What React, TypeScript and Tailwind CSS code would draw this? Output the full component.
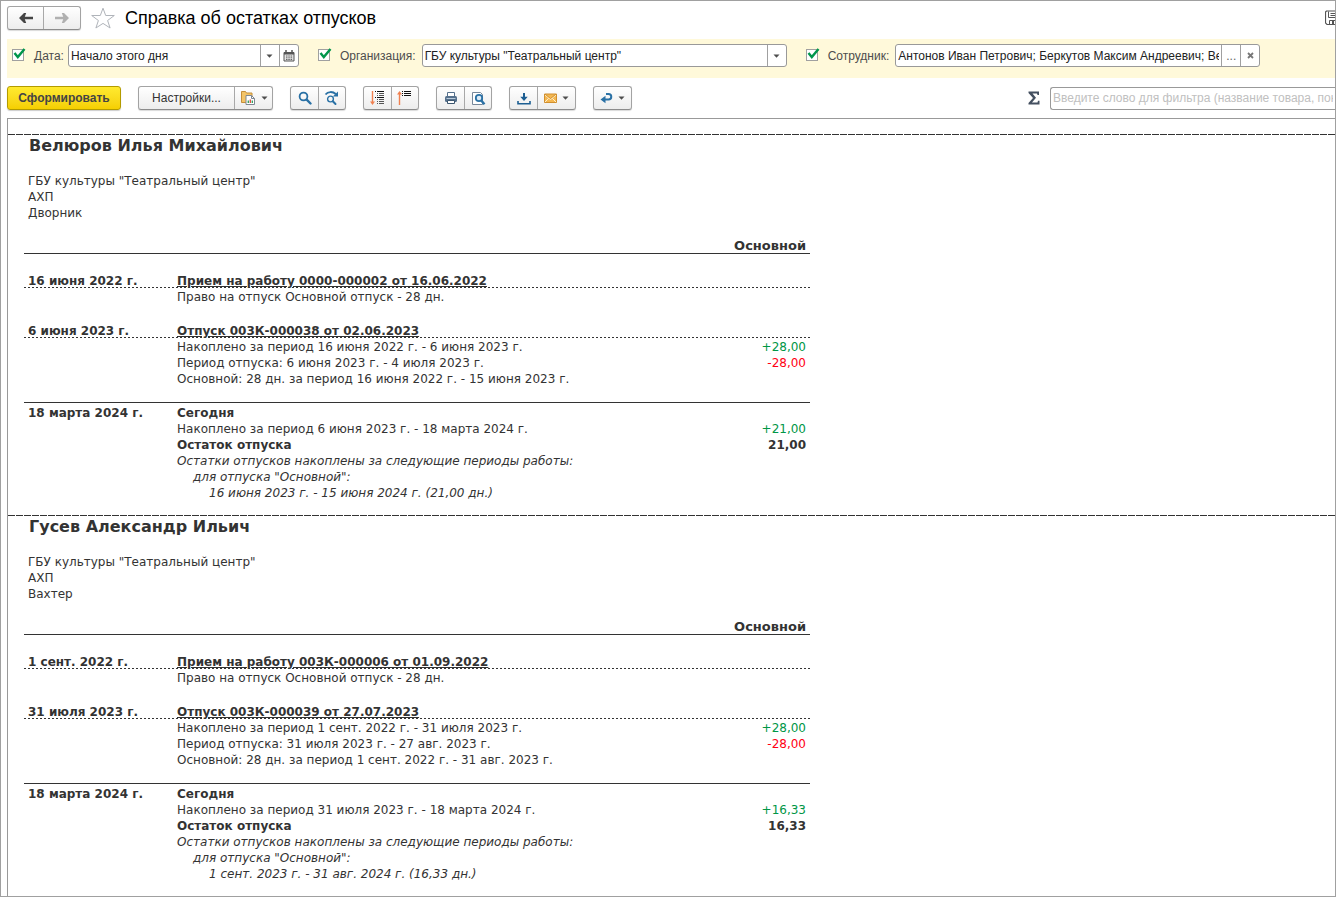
import { useState, type ReactNode } from "react";

type Line = { text: string; amount?: string; tone?: string; className?: string };

type Entry = {
  date: string;
  title: string;
  lines: Line[];
};

type Employee = {
  name: string;
  position: string;
  entries: Entry[];
  summary: Entry;
};

const ORGANIZATION = 'ГБУ культуры "Театральный центр"';

const GREEN = "text-[#009646]";
const RED = "text-[#ff0014]";

const EMPLOYEES: Employee[] = [
  {
    name: "Велюров Илья Михайлович",
    position: "Дворник",
    entries: [
      {
        date: "16 июня 2022 г.",
        title: "Прием на работу 0000-000002 от 16.06.2022",
        lines: [{ text: "Право на отпуск Основной отпуск - 28 дн." }],
      },
      {
        date: "6 июня 2023 г.",
        title: "Отпуск 003К-000038 от 02.06.2023",
        lines: [
          { text: "Накоплено за период 16 июня 2022 г. - 6 июня 2023 г.", amount: "+28,00", tone: GREEN },
          { text: "Период отпуска: 6 июня 2023 г. - 4 июля 2023 г.", amount: "-28,00", tone: RED },
          { text: "Основной: 28 дн. за период 16 июня 2022 г. - 15 июня 2023 г." },
        ],
      },
    ],
    summary: {
      date: "18 марта 2024 г.",
      title: "Сегодня",
      lines: [
        { text: "Накоплено за период 6 июня 2023 г. - 18 марта 2024 г.", amount: "+21,00", tone: GREEN },
        { text: "Остаток отпуска", amount: "21,00", className: "font-bold" },
        { text: "Остатки отпусков накоплены за следующие периоды работы:", className: "italic" },
        { text: 'для отпуска "Основной":', className: "pl-4 italic" },
        { text: "16 июня 2023 г. - 15 июня 2024 г. (21,00 дн.)", className: "pl-8 italic" },
      ],
    },
  },
  {
    name: "Гусев Александр Ильич",
    position: "Вахтер",
    entries: [
      {
        date: "1 сент. 2022 г.",
        title: "Прием на работу 003К-000006 от 01.09.2022",
        lines: [{ text: "Право на отпуск Основной отпуск - 28 дн." }],
      },
      {
        date: "31 июля 2023 г.",
        title: "Отпуск 003К-000039 от 27.07.2023",
        lines: [
          { text: "Накоплено за период 1 сент. 2022 г. - 31 июля 2023 г.", amount: "+28,00", tone: GREEN },
          { text: "Период отпуска: 31 июля 2023 г. - 27 авг. 2023 г.", amount: "-28,00", tone: RED },
          { text: "Основной: 28 дн. за период 1 сент. 2022 г. - 31 авг. 2023 г." },
        ],
      },
    ],
    summary: {
      date: "18 марта 2024 г.",
      title: "Сегодня",
      lines: [
        { text: "Накоплено за период 31 июля 2023 г. - 18 марта 2024 г.", amount: "+16,33", tone: GREEN },
        { text: "Остаток отпуска", amount: "16,33", className: "font-bold" },
        { text: "Остатки отпусков накоплены за следующие периоды работы:", className: "italic" },
        { text: 'для отпуска "Основной":', className: "pl-4 italic" },
        { text: "1 сент. 2023 г. - 31 авг. 2024 г. (16,33 дн.)", className: "pl-8 italic" },
      ],
    },
  },
];

const Caret = () => (
  <svg width="7" height="4" viewBox="0 0 7 4" className="shrink-0" aria-hidden>
    <path d="M0.5 0.5h6L3.5 3.8z" fill="#4d4d4d" />
  </svg>
);

const ArrowIcon = ({ flip, color }: { flip?: boolean; color: string }) => (
  <svg width="14" height="12" viewBox="0 0 14 12" aria-hidden>
    <path
      transform={flip ? "translate(14 0) scale(-1 1)" : undefined}
      d="M0 6 5 1h2.200L5.800 4.700H14v2.600H5.800L7.200 11H5z"
      fill={color}
    />
  </svg>
);

const StarIcon = () => (
  <svg width="24" height="22" viewBox="0 0 24 22" aria-hidden>
    <path d="M12 1.2l2.700 7.300h8.600l-6.700 5 2.500 7.500L12 16.400l-7.100 4.600 2.500-7.500-6.700-5h8.600z" fill="#fff" stroke="#b0b4ba" />
  </svg>
);

const CalendarIcon = () => (
  <svg width="12" height="12" viewBox="0 0 12 12" aria-hidden>
    <path d="M1 2.500h10V11H1z" fill="#e4e4e4" stroke="#555" />
    <path d="M1 2h10v2.500H1z" fill="#555" />
    <path d="M3 0v3M9 0v3" stroke="#555" strokeWidth="1.500" />
    <path d="M3 6h1.500M5.300 6h1.500M7.600 6h1.500M3 7.800h1.500M5.300 7.800h1.500M7.600 7.800h1.500M3 9.500h1.500M5.300 9.500h1.500M7.600 9.500h1.500" stroke="#666" />
  </svg>
);

const SettingsIcon = () => (
  <svg width="16" height="16" viewBox="0 0 16 16" aria-hidden>
    <path d="M1.500 1.500h4l1 1.500h5.500v9.500H1.500z" fill="#f3c468" stroke="#c58f3a" />
    <path d="M6 5.500h5.500l3 3v6H6z" fill="#fff" stroke="#7e8792" />
    <path d="M11.500 5.500v3h3" fill="none" stroke="#7e8792" />
    <path d="M8.300 13V10.500M12.300 13v-2.500" stroke="#29a05a" strokeWidth="1.300" />
    <path d="M10.300 13V9.500" stroke="#e2473c" strokeWidth="1.300" />
  </svg>
);

const SearchIcon = () => (
  <svg width="14" height="14" viewBox="0 0 14 14" aria-hidden>
    <circle cx="5.500" cy="5.500" r="3.900" fill="none" stroke="#2a71a5" strokeWidth="1.800" />
    <path d="M8.700 8.700l3.800 3.800" stroke="#2a71a5" strokeWidth="2.400" strokeLinecap="round" />
  </svg>
);

const SearchNextIcon = () => (
  <svg width="16" height="16" viewBox="0 0 16 16" aria-hidden>
    <circle cx="6.500" cy="9" r="2.900" fill="none" stroke="#2a71a5" strokeWidth="1.400" />
    <path d="M8.800 11.300l2.700 2.700" stroke="#2a71a5" strokeWidth="2" strokeLinecap="round" />
    <path d="M1.500 4.500C4 1.500 8.500 1.200 11.800 4" fill="none" stroke="#2a71a5" strokeWidth="1.900" />
    <path d="M14 1.500v5H8.800z" fill="#2a71a5" />
  </svg>
);

const ExpandIcon = () => (
  <svg width="16" height="16" viewBox="0 0 16 16" aria-hidden>
    <path d="M2.500 1v12" stroke="#f08050" strokeWidth="1.400" />
    <path d="M0 11.500h5L2.500 15z" fill="#f08050" />
    <path d="M5 1.500h1M7 1.500h7M5 7.500h1M7 7.500h7" stroke="#111" />
    <path d="M7 3.500h1M9 3.500h5M7 5.500h1M9 5.500h5M7 9.500h1M9 9.500h5M7 11.500h1M9 11.500h5M7 13.500h1M9 13.500h5" stroke="#555" />
  </svg>
);

const CollapseIcon = () => (
  <svg width="16" height="16" viewBox="0 0 16 16" aria-hidden>
    <path d="M2.500 3v12" stroke="#f08050" strokeWidth="1.400" />
    <path d="M0 4.500h5L2.500 1z" fill="#f08050" />
    <path d="M5 1.500h1M7 1.500h7M5 3.500h1M7 3.500h7M5 5.500h1M7 5.500h7" stroke="#111" />
  </svg>
);

const PrinterIcon = () => (
  <svg width="14" height="14" viewBox="0 0 14 14" aria-hidden>
    <path d="M3.500 5.500v-4h7v4" fill="#fff" stroke="#55708c" />
    <rect x="1" y="5" width="12" height="6" rx="1.500" fill="#55708c" />
    <path d="M3.500 9.500h7v3h-7z" fill="#fff" stroke="#3c566f" />
    <path d="M2.500 7.500h9" stroke="#b9cadb" />
  </svg>
);

const PreviewIcon = () => (
  <svg width="15" height="15" viewBox="0 0 15 15" aria-hidden>
    <path d="M1.500 1.500h8l2 2v10h-10z" fill="#fff" stroke="#76879a" />
    <circle cx="8" cy="7" r="3.200" fill="#dcebf7" stroke="#2a71a5" strokeWidth="1.800" />
    <path d="M10.200 9.500l3.300 3.800" stroke="#2a71a5" strokeWidth="2.400" />
  </svg>
);

const DownloadIcon = () => (
  <svg width="14" height="13" viewBox="0 0 14 13" aria-hidden>
    <path d="M7 1v5" stroke="#1c5e92" strokeWidth="2" />
    <path d="M3.300 4.800h7.400L7 9z" fill="#1c5e92" />
    <path d="M1 9v2.800h12V9" fill="none" stroke="#1c5e92" strokeWidth="1.600" />
  </svg>
);

const MailIcon = () => (
  <svg width="13" height="10" viewBox="0 0 13 10" aria-hidden>
    <path d="M0.500 1h12v8.500H0.500z" fill="#f5b750" stroke="#d08f2e" />
    <path d="M1 2l5.500 4.500L12 2M1 9l3.700-3.700M12 9L8.300 5.300" fill="none" stroke="#fdf0d0" />
    <path d="M1 1.200l5.500 4.300L12 1.200" fill="none" stroke="#c98a2c" strokeWidth="0.800" />
  </svg>
);

const ReturnIcon = () => (
  <svg width="13" height="12" viewBox="0 0 13 12" aria-hidden>
    <path d="M4 7.500h4.500a2.700 2.700 0 0 0 0-5.500H6" fill="none" stroke="#2a71a5" strokeWidth="2" />
    <path d="M0.500 7.500L5.500 3.700v7.600z" fill="#2a71a5" />
  </svg>
);

const SaveIcon = () => (
  <svg width="16" height="16" viewBox="0 0 16 16" aria-hidden>
    <path d="M0.500 2l1-1h13v13.500H2l-1.500-1.500z" fill="#fff" stroke="#555" strokeWidth="1.200" />
    <path d="M3.500 1.500v6h9v-6M5.500 3.500h5M5.500 5.500h5M4.500 14v-3.500h7V14" fill="none" stroke="#555" />
    <path d="M7 11h2v3H7z" fill="#555" />
  </svg>
);

const ButtonGroup = ({ children, className = "" }: { children: ReactNode; className?: string }) => (
  <div
    className={`flex h-6 shrink-0 divide-x divide-[#a8a8a8] rounded-[3px] border border-[#a3a3a3] border-b-[#8c8c8c] bg-linear-to-b from-white to-[#ededed] shadow-[0_1px_1px_rgba(0,0,0,0.15)] ${className}`}
  >
    {children}
  </div>
);

const ToolButton = ({ label, wide, children }: { label: string; wide?: boolean; children: ReactNode }) => (
  <button
    type="button"
    aria-label={label}
    className={`flex items-center justify-center ${wide ? "w-[37px] gap-[5px]" : "w-[26px] first:w-7"}`}
  >
    {children}
  </button>
);

const FilterToggle = ({ id, label }: { id: string; label: string }) => {
  const [checked, setChecked] = useState(true);

  return (
    <label htmlFor={id} className="flex shrink-0 items-center gap-[9px] text-[#4d4d4d]">
      <span className="relative h-[13px] w-[13px]">
        <input
          id={id}
          type="checkbox"
          checked={checked}
          onChange={(e) => setChecked(e.target.checked)}
          className="block h-3 w-3 appearance-none border border-[#a0a0a0] bg-white"
        />
        {checked && (
          <svg width="13" height="12" viewBox="0 0 13 12" className="pointer-events-none absolute -top-px left-px" aria-hidden>
            <path d="M1.500 5l3.300 4L11.500 1" fill="none" stroke="#00964b" strokeWidth="2.400" />
          </svg>
        )}
      </span>
      {label}
    </label>
  );
};

const FilterField = ({
  label,
  value,
  className,
  children,
}: {
  label: string;
  value: string;
  className: string;
  children: ReactNode;
}) => (
  <div className={`flex h-[23px] shrink-0 divide-x divide-[#a0a0a0] rounded-[3px] border border-[#999] bg-white ${className}`}>
    <input aria-label={label} defaultValue={value} className="min-w-0 flex-1 rounded-l-[3px] px-0.5 text-[#222] outline-none" />
    {children}
  </div>
);

const FieldButton = ({ label, children }: { label: string; children: ReactNode }) => (
  <button
    type="button"
    aria-label={label}
    className="flex w-[19px] shrink-0 items-center justify-center text-[#666] last:w-[18px]"
  >
    {children}
  </button>
);

const LineRow = ({ line }: { line: Line }) => (
  <tr>
    <td />
    <td className={line.className}>{line.text}</td>
    <td className={`pr-1 text-right ${line.tone ?? ""} ${line.className ?? ""}`}>{line.amount}</td>
  </tr>
);

// The dotted rule runs under the date row, crossing the descenders of its text
const EntryRows = ({ entry }: { entry: Entry }) => (
  <tbody>
    <tr className="h-[17px]" />
    <tr className="bg-[linear-gradient(90deg,#333_2px,transparent_2px)] bg-[length:4px_1px] bg-[position:0_15px] bg-repeat-x font-bold">
      <td className="pt-px pl-1">{entry.date}</td>
      <td className="pt-px" colSpan={2}>
        <a href="#" className="underline">
          {entry.title}
        </a>
      </td>
    </tr>
    {entry.lines.map((line) => (
      <LineRow key={line.text} line={line} />
    ))}
  </tbody>
);

const EmployeeReport = ({ employee }: { employee: Employee }) => (
  <section className="bg-[linear-gradient(90deg,#333_7px,transparent_7px)] bg-[length:8px_1px] bg-repeat-x pt-px pb-3.5 pl-4">
    <h2 className="pl-[5px] text-base leading-[22px] font-bold">{employee.name}</h2>
    <div className="pt-4 pl-1">
      <p>{ORGANIZATION}</p>
      <p>АХП</p>
      <p>{employee.position}</p>
    </div>
    <table className="mt-4 w-[786px] table-fixed border-separate border-spacing-0">
      <colgroup>
        <col className="w-[153px]" />
        <col />
        <col className="w-[100px]" />
      </colgroup>
      <thead>
        <tr>
          <th colSpan={3} className="border-b border-[#333] pt-0.5 pr-1 text-right text-[13px] leading-[14px] font-bold">
            Основной
          </th>
        </tr>
        <tr className="h-px" />
      </thead>
      {employee.entries.map((entry) => (
        <EntryRows key={entry.title} entry={entry} />
      ))}
      <tbody>
        <tr className="h-[15px]" />
        <tr className="font-bold">
          <td className="border-t border-[#333] pt-0.5 pl-1">{employee.summary.date}</td>
          <td className="border-t border-[#333] pt-0.5" colSpan={2}>
            {employee.summary.title}
          </td>
        </tr>
        {employee.summary.lines.map((line) => (
          <LineRow key={line.text} line={line} />
        ))}
      </tbody>
    </table>
  </section>
);

export default function App() {
  return (
    <div className="flex h-screen flex-col overflow-hidden border border-[#a0a0a0] bg-white pl-1.5 font-['Liberation_Sans',Arial,sans-serif] text-xs text-[#333]">
      <header className="flex h-[38px] shrink-0 items-center pb-1">
        <ButtonGroup>
          <button type="button" aria-label="Назад" className="flex w-9 items-center justify-center">
            <ArrowIcon color="#444" />
          </button>
          <button type="button" aria-label="Вперед" className="flex w-9 items-center justify-center">
            <ArrowIcon flip color="#b0b0b0" />
          </button>
        </ButtonGroup>
        <button type="button" aria-label="В избранное" className="ml-2.5">
          <StarIcon />
        </button>
        <h1 className="ml-2.5 text-lg text-black">Справка об остатках отпусков</h1>
        <button type="button" aria-label="Сохранить" className="-mr-1.5 ml-auto">
          <SaveIcon />
        </button>
      </header>

      <div className="flex h-[39px] shrink-0 items-center overflow-hidden bg-[#fff9da] pb-1.5 pl-[5px]">
        <FilterToggle id="use-date" label="Дата:" />
        <FilterField label="Дата" value="Начало этого дня" className="ml-1 w-[231px]">
          <FieldButton label="Выбрать">
            <Caret />
          </FieldButton>
          <FieldButton label="Календарь">
            <CalendarIcon />
          </FieldButton>
        </FilterField>
        <div className="w-[19px] shrink-0" />
        <FilterToggle id="use-organization" label="Организация:" />
        <FilterField label="Организация" value={ORGANIZATION} className="ml-1.5 w-[365px]">
          <FieldButton label="Выбрать">
            <Caret />
          </FieldButton>
        </FilterField>
        <div className="w-[19px] shrink-0" />
        <FilterToggle id="use-employee" label="Сотрудник:" />
        <FilterField
          label="Сотрудник"
          value="Антонов Иван Петрович; Беркутов Максим Андреевич; Велюров Илья Михайлович"
          className="ml-1.5 w-[365px]"
        >
          <FieldButton label="Подобрать">...</FieldButton>
          <FieldButton label="Очистить">
            <svg width="7" height="7" viewBox="0 0 7 7" aria-hidden>
              <path d="M1 1l5 5M6 1L1 6" stroke="#777" strokeWidth="1.800" />
            </svg>
          </FieldButton>
        </FilterField>
      </div>

      <div className="flex h-10 shrink-0 items-center">
        <button
          type="button"
          className="h-6 w-[114px] shrink-0 rounded-[3px] border border-[#b39b00] bg-linear-to-b from-[#ffea2e] to-[#f5cf00] font-bold text-[#444] shadow-[0_1px_1px_rgba(0,0,0,0.2)]"
        >
          Сформировать
        </button>
        <ButtonGroup className="ml-[17px]">
          <button type="button" className="w-24">
            Настройки...
          </button>
          <ToolButton label="Варианты отчета" wide>
            <SettingsIcon />
            <Caret />
          </ToolButton>
        </ButtonGroup>
        <ButtonGroup className="ml-[17px]">
          <ToolButton label="Найти">
            <SearchIcon />
          </ToolButton>
          <ToolButton label="Найти далее">
            <SearchNextIcon />
          </ToolButton>
        </ButtonGroup>
        <ButtonGroup className="ml-[17px]">
          <ToolButton label="Развернуть">
            <ExpandIcon />
          </ToolButton>
          <ToolButton label="Свернуть">
            <CollapseIcon />
          </ToolButton>
        </ButtonGroup>
        <ButtonGroup className="ml-[17px]">
          <ToolButton label="Печать">
            <PrinterIcon />
          </ToolButton>
          <ToolButton label="Предварительный просмотр">
            <PreviewIcon />
          </ToolButton>
        </ButtonGroup>
        <ButtonGroup className="ml-[17px]">
          <ToolButton label="Сохранить отчет">
            <DownloadIcon />
          </ToolButton>
          <ToolButton label="Отправить" wide>
            <MailIcon />
            <Caret />
          </ToolButton>
        </ButtonGroup>
        <ButtonGroup className="ml-[17px]">
          <ToolButton label="Вернуться" wide>
            <ReturnIcon />
            <Caret />
          </ToolButton>
        </ButtonGroup>
        <button type="button" aria-label="Сумма" className="ml-auto shrink-0 pr-2.5">
          <svg width="12" height="14" viewBox="0 0 12 14" aria-hidden>
            <path d="M0.500 0.500h10.500v3.500H9.500L9 2.500H4.500L8 6.800 4 11.500h5.500l0.500-1.800h1.500v3.800H0.500v-1.500L5 7 0.500 2z" fill="#445060" />
          </svg>
        </button>
        <input
          aria-label="Фильтр"
          placeholder="Введите слово для фильтра (название товара, покупателя и пр.)"
          className="h-[23px] w-[285px] shrink-0 rounded-l-[3px] border border-r-0 border-[#999] px-0.5 outline-none placeholder:text-[#c0c0c0]"
        />
      </div>

      <main className="flex-1 overflow-hidden border-t border-l border-[#999] pt-[15px] font-['DejaVu_Sans',Verdana,sans-serif] text-xs leading-4">
        {EMPLOYEES.map((employee) => (
          <EmployeeReport key={employee.name} employee={employee} />
        ))}
      </main>
    </div>
  );
}
